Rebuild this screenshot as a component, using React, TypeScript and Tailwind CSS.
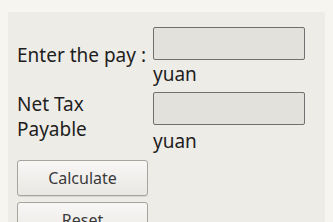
import React from 'react';

export default function App() {
  const font = { fontFamily: '"Noto Sans", "DejaVu Sans", sans-serif' };
  return (
    <div className="w-[333px] h-[222px] overflow-hidden bg-[#f7f5f0] pt-3 px-2" style={font}>
      <div className="h-full bg-[#eeece7] pl-[9px] pt-[15px]">
        <div className="grid grid-cols-[136px_152px]">
          <div className="self-center whitespace-nowrap text-[19px] leading-[24px] text-[#1e1e1e] pb-[4px]">Enter the pay :</div>
          <div>
            <input
              type="text"
              className="block w-[152px] h-[33px] bg-[#e3e1dc] border border-[#707070] rounded-[2px] outline-none"
            />
            <div className="text-[19px] leading-[24px] text-[#1e1e1e] mt-[2px]">yuan</div>
          </div>

          <div className="text-[19px] leading-[25px] text-[#1e1e1e] mt-[5px] pt-[1px]">
            Net Tax
            <br />
            Payable
          </div>
          <div className="mt-[6px]">
            <input
              type="text"
              className="block w-[152px] h-[33px] bg-[#e3e1dc] border border-[#707070] rounded-[2px] outline-none"
            />
            <div className="text-[19px] leading-[24px] text-[#1e1e1e] mt-[4px]">yuan</div>
          </div>
        </div>

        <div className="flex flex-col gap-[6px] mt-[7px] w-[131px]">
          <button className="h-[36px] rounded-[3px] border border-[#a7a39d] bg-gradient-to-b from-[#f8f7f5] to-[#eae8e4] text-[16px] text-[#3a3a3a] shadow-[0_1px_0_#d8d5cf]">
            Calculate
          </button>
          <button className="h-[36px] rounded-[3px] border border-[#a7a39d] bg-gradient-to-b from-[#f8f7f5] to-[#eae8e4] text-[16px] text-[#3a3a3a] shadow-[0_1px_0_#d8d5cf]">
            Reset
          </button>
        </div>
      </div>
    </div>
  );
}
